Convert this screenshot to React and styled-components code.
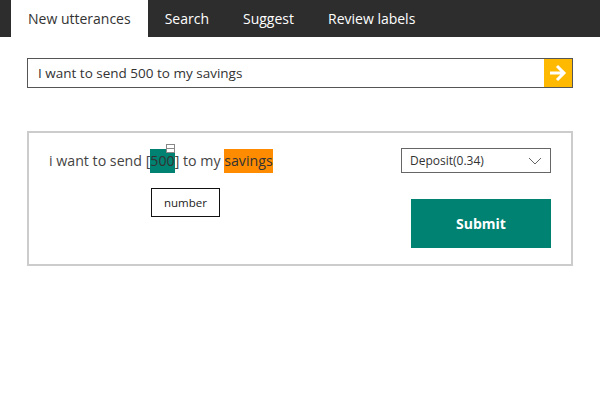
import React from 'react';
import styled, { createGlobalStyle } from 'styled-components';

const Global = createGlobalStyle`
  body {
    margin: 0;
    background: #fff;
    font-family: "Open Sans", "Noto Sans", sans-serif;
    color: #333;
  }
`;

const tabs = ['New utterances', 'Search', 'Suggest', 'Review labels'];

export default function App() {
    return (
        <>
            <Global />
            <Nav>
                {tabs.map((t, i) => (
                    <Tab key={t} active={i === 0}>{t}</Tab>
                ))}
            </Nav>
            <Main>
                <SearchBar>
                    <SearchInput defaultValue="I want to send 500 to my savings" />
                    <GoButton aria-label="go">
                        <svg width="20" height="18" viewBox="0 0 20 18">
                            <path d="M2 9h14M9 2l7 7-7 7" stroke="#fff" strokeWidth="3" fill="none" />
                        </svg>
                    </GoButton>
                </SearchBar>
                <Card>
                    <Left>
                        <Utterance>
                            i want to send [<Entity color="#008272">500<Toggle /></Entity>] to my{' '}
                            <Entity color="#ff8c00">savings</Entity>
                        </Utterance>
                        <Label>number</Label>
                    </Left>
                    <Right>
                        <Select>
                            <span>Deposit(0.34)</span>
                            <svg width="14" height="8" viewBox="0 0 14 8">
                                <path d="M1 1l6 6 6-6" stroke="#666" strokeWidth="1" fill="none" />
                            </svg>
                        </Select>
                        <Submit>Submit</Submit>
                    </Right>
                </Card>
            </Main>
        </>
    );
}

const Nav = styled.nav`
    display: flex;
    height: 37px;
    padding-left: 11px;
    background-color: #2d2d2d;
`;
const Tab = styled.div`
    display: flex;
    align-items: center;
    padding: 0 17px;
    font-size: 14px;
    color: ${p => (p.active ? '#333' : '#fff')};
    background-color: ${p => (p.active ? '#fff' : 'transparent')};
`;
const Main = styled.div`
    padding: 21px 27px 0 27px;
    width: 546px;
`;
const SearchBar = styled.div`
    display: flex;
    height: 30px;
    border: 1px solid #555;
    box-sizing: border-box;
`;
const SearchInput = styled.input`
    flex: 1;
    border: none;
    outline: none;
    padding: 0 10px;
    font: 13.5px "Open Sans", "Noto Sans", sans-serif;
    color: #333;
`;
const GoButton = styled.button`
    width: 28px;
    border: none;
    padding: 0;
    background-color: #ffb900;
    display: flex;
    align-items: center;
    justify-content: center;
`;
const Card = styled.div`
    margin-top: 43px;
    height: 135px;
    box-sizing: border-box;
    border: 2px solid #ccc;
    display: flex;
    justify-content: space-between;
    padding: 15px 20px 0 20px;
`;
const Left = styled.div`
    display: flex;
    flex-direction: column;
    padding-top: 1px;
`;
const Utterance = styled.div`
    font-size: 14.2px;
    line-height: 24px;
    color: #444;
`;
const Entity = styled.span`
    position: relative;
    display: inline-block;
    background-color: ${p => p.color};
    color: #333;
`;
const Toggle = styled.span`
    position: absolute;
    right: 0;
    top: -5px;
    width: 7px;
    height: 7px;
    border: 1px solid #888;
    background: #fff;
    &::after {
        content: '';
        position: absolute;
        left: 0;
        right: 0;
        top: 3px;
        height: 1px;
        background: #888;
    }
`;
const Label = styled.div`
    align-self: flex-start;
    margin: 15px 0 0 102px;
    border: 1px solid #111;
    padding: 0 12px;
    height: 27px;
    display: flex;
    align-items: center;
    font-size: 11.5px;
    color: #222;
`;
const Right = styled.div`
    display: flex;
    flex-direction: column;
    align-items: flex-end;
`;
const Select = styled.div`
    width: 150px;
    height: 25px;
    box-sizing: border-box;
    border: 1px solid #666;
    display: flex;
    align-items: center;
    justify-content: space-between;
    padding: 0 8px;
    font-size: 12px;
    color: #333;
`;
const Submit = styled.button`
    margin-top: 26px;
    width: 140px;
    height: 49px;
    border: none;
    background-color: #008272;
    color: #fff;
    font: bold 14px "Open Sans", "Noto Sans", sans-serif;
`;
